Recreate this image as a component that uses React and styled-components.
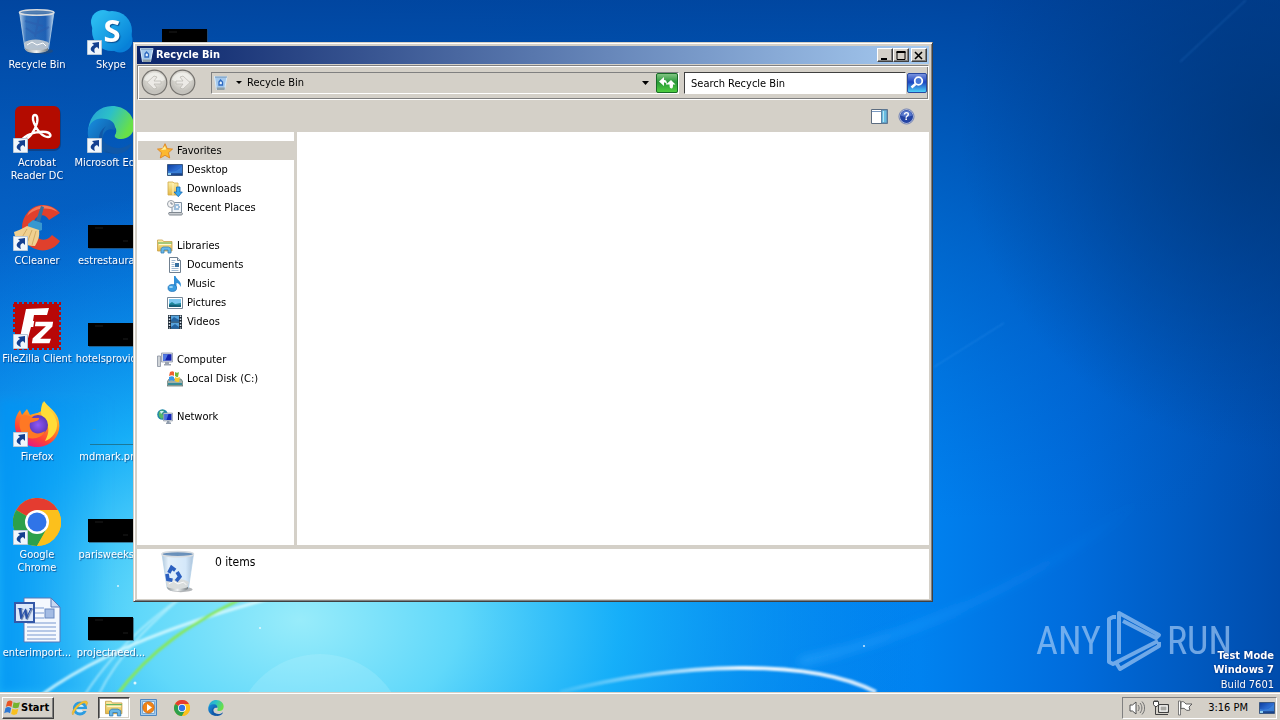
import styled, { createGlobalStyle, css } from "styled-components"

const GlobalStyle = createGlobalStyle`
  * {
    box-sizing: border-box;
  }
  body {
    margin: 0;
    font-family: "DejaVu Sans Condensed", "DejaVu Sans", sans-serif;
    font-size: 11px;
    line-height: 13px;
    color: #000;
  }
  button, input {
    font: inherit;
    color: inherit;
    padding: 0;
    margin: 0;
    border: 0;
    background: none;
  }
  svg {
    display: block;
    flex-shrink: 0;
  }
`

const raised = css`
  background-color: #d4d0c8;
  border: 1px solid;
  border-color: #fff #404040 #404040 #fff;
  box-shadow: inset -1px -1px #808080;
`

const sunken = css`
  border: 1px solid;
  border-color: #808080 #fff #fff #808080;
`

const Screen = styled.div`
  display: flex;
  flex-direction: column;
  min-height: 100vh;
  overflow: hidden;
`

const Desktop = styled.main`
  position: relative;
  flex: 1;
  overflow: hidden;
`

const Wallpaper = styled.svg`
  position: absolute;
  inset: 0;
  width: 100%;
  height: 100%;
`

const Shortcuts = styled.div`
  position: relative;
  display: grid;
  grid-auto-flow: column;
  grid-template-rows: repeat(7, 98px);
  grid-auto-columns: 74px;
`

const Shortcut = styled.a`
  display: flex;
  flex-direction: column;
  align-items: center;
  gap: 2px;
  padding-top: 8px;
  color: #fff;
  text-align: center;
  text-decoration: none;
  text-shadow: 1px 1px 1px rgba(0, 30, 90, 0.6);
`

const ShortcutIcon = styled.span`
  position: relative;
  display: block;
  width: 48px;
  height: 48px;
`

const ShortcutLabel = styled.span`
  width: ${props => props.$wrap ? "64px" : "72px"};
  white-space: ${props => props.$wrap ? "normal" : "nowrap"};
  display: flex;
  justify-content: center;
`

const ArrowBadge = styled.svg`
  position: absolute;
  left: 0;
  bottom: 1px;
`

const Window = styled.section`
  position: absolute;
  top: 42px;
  right: 347px;
  bottom: 90px;
  left: 133px;
  display: flex;
  flex-direction: column;
  padding: 2px;
  background-color: #d4d0c8;
  border: 1px solid;
  border-color: #d4d0c8 #404040 #404040 #d4d0c8;
  box-shadow: inset 1px 1px #fff, inset -1px -1px #808080;
`

const TitleBar = styled.header`
  display: flex;
  align-items: center;
  gap: 1px;
  height: 18px;
  margin: 1px;
  padding: 0 2px;
  color: #fff;
  background: linear-gradient(90deg, #0a246a, #a6caf0);
`

const Title = styled.h1`
  flex: 1;
  margin: 0;
  font-size: 11px;
  line-height: 18px;
  font-weight: bold;
`

const CaptionButtons = styled.div`
  display: flex;
`

const CaptionButton = styled.button`
  ${raised}
  display: grid;
  place-items: center;
  width: 16px;
  height: 14px;
  margin-left: ${props => props.$apart ? "2px" : "0"};
`

const AddressBand = styled.div`
  display: flex;
  align-items: center;
  height: 35px;
  margin: 0 1px;
  padding-left: 3px;
  border: 1px solid;
  border-color: #808080 #fff #fff #808080;
  box-shadow: inset 1px 1px #fff, inset -1px -1px #808080;
`

const Travel = styled.div`
  display: flex;
  align-items: center;
  gap: 1px;
  margin-right: 15px;
`

const TravelButton = styled.button`
  width: 27px;
  height: 27px;
`

const AddressBox = styled.div`
  ${sunken}
  display: flex;
  align-items: center;
  flex: 1;
  height: 22px;
  padding-left: 1px;
`

const Crumb = styled.button`
  display: flex;
  align-items: center;
  flex: 1;
  gap: 4px;
  text-align: left;
`

const SquareButton = styled.button`
  display: grid;
  place-items: center;
  width: 22px;
  height: 22px;
  flex-shrink: 0;
`

const SearchForm = styled.form`
  display: flex;
  align-items: center;
  width: 244px;
  margin-left: 5px;
`

const SearchInput = styled.input`
  flex: 1;
  min-width: 0;
  height: 22px;
  padding: 1px 6px 0;
  background-color: #fff;
  border: 1px solid;
  border-color: #404040 #fff #fff #404040;
  outline: 1px solid #d4d0c8;
  &::placeholder {
    color: #000;
    opacity: 1;
  }
`

const CommandBar = styled.div`
  display: flex;
  align-items: center;
  justify-content: flex-end;
  gap: 10px;
  height: 32px;
  padding-right: 15px;
`

const Panes = styled.div`
  display: flex;
  flex: 1;
  min-height: 0;
  margin: 0 1px;
`

const Sidebar = styled.nav`
  display: flex;
  flex-direction: column;
  gap: 19px;
  width: 160px;
  padding: 9px 0 0 1px;
  background-color: #fff;
  border-right: 3px solid #d4d0c8;
`

const Group = styled.ul`
  margin: 0;
  padding: 0;
  list-style: none;
`

const NavLink = styled.a`
  display: flex;
  align-items: center;
  gap: 4px;
  height: 19px;
  padding-left: ${props => props.$child ? "29px" : "19px"};
  color: #000;
  text-decoration: none;
  background-color: ${props => props.$active ? "#d4d0c8" : "transparent"};
`

const FileArea = styled.div`
  flex: 1;
  background-color: #fff;
`

const Details = styled.footer`
  display: flex;
  gap: 15px;
  height: 50px;
  margin: 4px 1px 0;
  padding: 1px 0 0 19px;
  background-color: #fff;
`

const ItemCount = styled.p`
  margin: 6px 0 0;
  font-size: 12px;
`

const Branding = styled.div`
  position: absolute;
  right: 48px;
  bottom: 19px;
  display: flex;
  align-items: center;
  gap: 5px;
  color: rgba(170, 208, 248, 0.65);
  font-family: "Roboto Condensed", "Liberation Sans Narrow", Roboto, sans-serif;
  font-size: 38px;
  line-height: 64px;
`

const BuildInfo = styled.div`
  position: absolute;
  right: 6px;
  bottom: 0;
  color: #fff;
  text-align: right;
  line-height: 15px;
  text-shadow: 0 0 2px rgba(0, 20, 80, 0.8);
`

const BuildStrong = styled.strong`
  display: block;
  line-height: 14px;
`

const Taskbar = styled.footer`
  display: flex;
  align-items: center;
  height: 28px;
  padding: 2px 3px 0 2px;
  background-color: #d4d0c8;
  border-top: 1px solid #d4d0c8;
  box-shadow: inset 0 1px #fff;
`

const StartButton = styled.button`
  ${raised}
  display: flex;
  align-items: center;
  height: 22px;
  width: 52px;
  padding-left: 1px;
  margin-right: 9px;
  font-weight: bold;
`

const TaskButton = styled.button`
  display: grid;
  place-items: center;
  width: 32px;
  height: 22px;
  margin: 0 1px;
  ${props => props.$active && css`
    background-color: #fff;
    border: 1px solid;
    border-color: #404040 #fff #fff #404040;
    box-shadow: inset 1px 1px #808080, inset -1px -1px #d4d0c8;
  `}
`

const Tray = styled.div`
  ${sunken}
  display: flex;
  align-items: center;
  gap: 8px;
  height: 22px;
  margin-left: auto;
  padding: 0 1px 0 6px;
`

const Clock = styled.time`
  margin: 0 3px 0 7px;
`

function Gradients () {
  return (
    <svg width="0" height="0" aria-hidden="true">
      <defs>
        <linearGradient id="glass" x1="0" x2="1">
          <stop offset="0" stopColor="#e4f0fa" stopOpacity=".85"/>
          <stop offset=".2" stopColor="#7cacdc" stopOpacity=".4"/>
          <stop offset=".75" stopColor="#4c84cc" stopOpacity=".4"/>
          <stop offset="1" stopColor="#e8f4fc" stopOpacity=".85"/>
        </linearGradient>
        <linearGradient id="paleGlass" x1="0" x2="1">
          <stop offset="0" stopColor="#b0c8dc"/>
          <stop offset=".2" stopColor="#e4f0fa"/>
          <stop offset=".75" stopColor="#d4e8fa"/>
          <stop offset="1" stopColor="#a8c0d8"/>
        </linearGradient>
        <linearGradient id="metal" x1="0" x2="1">
          <stop offset="0" stopColor="#90989c"/>
          <stop offset=".5" stopColor="#f0f2f2"/>
          <stop offset="1" stopColor="#747c80"/>
        </linearGradient>
        <linearGradient id="skype" x1="0" y1="0" x2="1" y2="1">
          <stop offset="0" stopColor="#30c4f4"/>
          <stop offset="1" stopColor="#0078d4"/>
        </linearGradient>
        <linearGradient id="edgeTop" x1="0" y1="0" x2="1" y2=".4">
          <stop offset="0" stopColor="#249cd8"/>
          <stop offset=".5" stopColor="#2cc0c8"/>
          <stop offset="1" stopColor="#68e048"/>
        </linearGradient>
        <linearGradient id="edgeLow" x1="0" y1="0" x2="1" y2="1">
          <stop offset="0" stopColor="#1890e0"/>
          <stop offset="1" stopColor="#0c4894"/>
        </linearGradient>
        <linearGradient id="fox" x1=".8" y1="0" x2=".3" y2="1">
          <stop offset="0" stopColor="#fff44c"/>
          <stop offset=".4" stopColor="#ff9820"/>
          <stop offset=".75" stopColor="#ff4038"/>
          <stop offset="1" stopColor="#e0148c"/>
        </linearGradient>
        <radialGradient id="foxGlobe">
          <stop offset="0" stopColor="#9058f8"/>
          <stop offset="1" stopColor="#5c38b8"/>
        </radialGradient>
        <linearGradient id="screenBlue" x1="0" y1="0" x2="1" y2="1">
          <stop offset="0" stopColor="#0c3c9c"/>
          <stop offset=".5" stopColor="#2c6cd0"/>
          <stop offset="1" stopColor="#1450b0"/>
        </linearGradient>
        <linearGradient id="folder" x1="0" y1="0" x2="0" y2="1">
          <stop offset="0" stopColor="#fcf0a8"/>
          <stop offset="1" stopColor="#e4b848"/>
        </linearGradient>
        <linearGradient id="green" x1="0" y1="0" x2="0" y2="1">
          <stop offset="0" stopColor="#88c888"/>
          <stop offset=".45" stopColor="#289838"/>
          <stop offset="1" stopColor="#50d040"/>
        </linearGradient>
        <linearGradient id="seek" x1="0" y1="0" x2="0" y2="1">
          <stop offset="0" stopColor="#8098e0"/>
          <stop offset=".45" stopColor="#1c44c0"/>
          <stop offset="1" stopColor="#50d8fc"/>
        </linearGradient>
        <radialGradient id="round" cx=".5" cy=".35">
          <stop offset="0" stopColor="#f0efec"/>
          <stop offset=".6" stopColor="#d8d6d0"/>
          <stop offset="1" stopColor="#c4c2bc"/>
        </radialGradient>
      </defs>
    </svg>
  )
}

function Bin ({ size = 48, full }) {
  return (
    <svg width={size} height={size} viewBox="0 0 48 48">
      <ellipse cx="27" cy="43" rx="13" ry="3" fill="#404850" opacity=".4"/>
      <path d="M6.500 4 12 41c1 4 22 4 23.500 0L41 4z" fill={full ? "url(#paleGlass)" : "url(#glass)"} stroke="#b4d0e8" strokeWidth=".8"/>
      <path d="M11 35c6-5 19-4 25 0l-1.500 6c-2 4-20 4-22 0z" fill="#d8d8d4" opacity=".8"/>
      <path d="M12 40c3 3 19 3 23 0v2c-2 4-21 4-22.500 0z" fill="url(#metal)"/>
      <path d="m14 37 5-3 5 3 6-2 3 3" fill="none" stroke="#fff" strokeWidth="1"/>
      {full
        ? <g fill="none" stroke="#2c60c0" strokeWidth="4">
            <path d="m14 25 3-6 4 3"/>
            <path d="m12 26 1 6 5 1"/>
            <path d="m23 24 3 5-4 5"/>
          </g>
        : <path d="m13 20 9 6 14-7M26 9l-4 20M12 13l18 5" fill="none" stroke="#2c5cac" strokeWidth="2" opacity=".5"/>}
      <ellipse cx="23.700" cy="4.500" rx="17.200" ry="2.800" fill="#507cac" fillOpacity=".8" stroke="#d8dce0" strokeWidth="1.600"/>
    </svg>
  )
}

function TinyBin () {
  return (
    <svg width="16" height="16" viewBox="0 0 16 16">
      <path d="m1.500 1.500 2 13h8l2.500-13z" fill="#a4c8ec" stroke="#d8ecfc"/>
      <path d="M3.500 12.500h8.500l-.5 2.500H4z" fill="#90a0a8"/>
      <path d="M2 2h12" stroke="#7090b0"/>
      <path d="m6 7 1.500-2L9.500 7v3H6z" fill="#e8f4ff" stroke="#2c68c0" strokeWidth="1.300"/>
    </svg>
  )
}

function Skype () {
  return (
    <svg width="48" height="48" viewBox="0 0 48 48">
      <circle cx="16" cy="14" r="12" fill="#28b8f0"/>
      <circle cx="33" cy="32" r="12.500" fill="#0880d8"/>
      <circle cx="25" cy="23" r="20" fill="url(#skype)"/>
      <text x="25" y="34" textAnchor="middle" fontFamily="Open Sans, sans-serif" fontWeight="bold" fontSize="31" fill="#fff">S</text>
    </svg>
  )
}

function Acrobat () {
  return (
    <svg width="48" height="48" viewBox="0 0 48 48">
      <rect x="3" y="1" width="45" height="44" rx="7" fill="#182c58" opacity=".5"/>
      <rect x="2" y="0" width="45" height="43" rx="6" fill="#b30b00"/>
      <path d="M11 34c5-1 11-9 13-17 1-5 0-8-2-8s-3 3-1 8c3 8 9 14 14 14 4 0 3-4-2-5-6-1-14 1-18 3-5 3-7 5-4 5z" fill="none" stroke="#fff" strokeWidth="2.400"/>
    </svg>
  )
}

function Edge ({ size = 48 }) {
  return (
    <svg width={size} height={size} viewBox="0 0 48 48">
      <path d="M1 24C3 8 13 0 25 0c13 0 22 9 22 20 0 8-6 13-13 13-5 0-7-2-6-4 3-4 1-11-7-11C11 18 3 23 1 24z" fill="url(#edgeTop)"/>
      <path d="M1 24c2-9 9-13 18-11 6 1 10 5 9 11-8-3-13 3-12 10 1 6 6 11 12 13C12 49-1 38 1 24z" fill="url(#edgeLow)"/>
      <path d="M19 20c-5 6-5 15 2 19 8 5 17 3 22-1 2-1 2 1 1 2-4 6-10 8-16 8-9-1-16-8-16-16 0-5 3-9 7-12z" fill="#1058a8"/>
    </svg>
  )
}

function CCleaner () {
  return (
    <svg width="48" height="48" viewBox="0 0 48 48">
      <path d="M47 9C39-1 23-2 15 8 5 19 8 38 20 44c10 5 21 2 27-7l-8-6c-5 6-11 6-15 2-6-6-5-16 0-20 5-3 9-2 12 3z" fill="#e0402c"/>
      <path d="M45 8C36-1 24 0 16 8l-2 4c8-8 20-10 31-4z" fill="#f47858"/>
      <path d="M27 18 31 3l-3-1-5 15z" fill="#3470a0"/>
      <path d="m15 20 5-4 9 3v7l-5 2-9-4z" fill="#3898d0"/>
      <path d="M14 22C9 25 4 27 1 28c1 9 10 14 21 14 3-5 5-10 4-16z" fill="#f0d090"/>
      <path d="m14 25-6 10m11-9-5 13m9-12-4 14" stroke="#c8a058" strokeWidth=".8" fill="none"/>
    </svg>
  )
}

function FileZilla () {
  return (
    <svg width="48" height="48" viewBox="0 0 48 48">
      <rect x="2" y="2" width="44" height="44" fill="#b80808"/>
      <rect x="1" y="1" width="46" height="46" fill="none" stroke="#b80808" strokeWidth="2" strokeDasharray="3 2"/>
      <path d="m13 7 23-1-2 7H21l-1 6h11l-2 6H18l-4 15H6z" fill="#fff"/>
      <path d="M22 19h19l-1 6-11 11h10l-2 6H18l1-6 12-11H21z" fill="#fff" stroke="#b80808" strokeWidth="1.500"/>
    </svg>
  )
}

function Firefox () {
  return (
    <svg width="48" height="48" viewBox="0 0 48 48">
      <path d="M31 1c3 5 11 9 14 17 5 14-4 28-19 29C11 48 1 36 2 23c0-5 2-9 5-13l2 5 5-6 3 6c6-2 10-2 12-5 1-3 0-6 2-9z" fill="url(#fox)"/>
      <path d="M30 2c4 7 12 10 14 21 1 8-5 16-12 18 5-9 4-15 0-20-5-5-5-12-2-19z" fill="#ffdc38"/>
      <circle cx="25" cy="25" r="10" fill="url(#foxGlobe)"/>
      <path d="M8 17c4-3 8-2 12 1h6c1 3-7 4-9 5-2 8 6 14 15 8-3 8-17 11-23 2-3-5-3-11-1-16z" fill="#ff7824"/>
    </svg>
  )
}

function Chrome ({ size = 48 }) {
  return (
    <svg width={size} height={size} viewBox="0 0 48 48">
      <circle cx="24" cy="24" r="24" fill="#fcc01c"/>
      <path d="M24 24 3.200 12A24 24 0 0 1 44.800 12z" fill="#e43c30"/>
      <path d="M24 24 3.200 12A24 24 0 0 0 24 48l10-18z" fill="#2ca04c"/>
      <path d="M24 12h20.800A24 24 0 0 1 24 48l10.400-18z" fill="#fcc01c"/>
      <circle cx="24" cy="24" r="12" fill="#fff"/>
      <circle cx="24" cy="24" r="9.500" fill="#3074e8"/>
    </svg>
  )
}

function WordDoc () {
  return (
    <svg width="48" height="48" viewBox="0 0 48 48">
      <path d="M11 2h27l9 9v35H11z" fill="#f4f8fe" stroke="#5878b8"/>
      <path d="m38 2 9 9h-9z" fill="#c8d8f0" stroke="#5878b8"/>
      <path d="M22 12h9m-9 5h9m-9 5h9M14 27h29M14 31h29M14 35h29M14 39h29M14 43h29" stroke="#7898d0"/>
      <rect x="32" y="13" width="9" height="9" fill="#a4bce4" stroke="#6888c0"/>
      <rect x="2" y="7" width="19" height="19" fill="#dce8fa" stroke="#3458a8" strokeWidth="2"/>
      <text x="11" y="23" textAnchor="middle" fontFamily="Liberation Serif, serif" fontWeight="bold" fontStyle="italic" fontSize="17" fill="#2850a8">W</text>
    </svg>
  )
}

function Thumb () {
  return (
    <svg width="48" height="48" viewBox="0 0 48 48">
      <path d="M2 22h45v23H2z" fill="#304858" opacity=".6"/>
      <path d="M1 21h45v23H1z" fill="#000"/>
      <path d="M8 24h8m20 13h5" stroke="#1c1c1c"/>
    </svg>
  )
}

function ThinThumb () {
  return (
    <svg width="48" height="48" viewBox="0 0 48 48">
      <path d="M3 44.500h45" stroke="#1c7898"/>
      <path d="M6 29.500h3" stroke="#38a0c8"/>
    </svg>
  )
}

function ShortcutArrow () {
  return (
    <ArrowBadge width="15" height="15" viewBox="0 0 15 15">
      <path d="M.5.5h14v14H.5z" fill="#f0f6fc" stroke="#b8c8d8"/>
      <path d="m5 3 7-1v7l-2-2c-3 1-3 3-2 6-5-2-6-5-1-8z" fill="#144090"/>
    </ArrowBadge>
  )
}

function Screenlet () {
  return (
    <svg width="16" height="16" viewBox="0 0 16 16">
      <path d="M.5 2.500h15v11H.5z" fill="url(#screenBlue)" stroke="#3c5880"/>
      <path d="M1 9c5 2 10 0 14-5v8H1z" fill="#4890e0" opacity=".6"/>
      <path d="M1 12h14" stroke="#102c60"/>
      <path d="M1 11h3v2H1z" fill="#90d0f0"/>
    </svg>
  )
}

function Star () {
  return (
    <svg width="16" height="16" viewBox="0 0 16 16">
      <path d="m8 .7 2.200 4.900 5.300.5-4 3.600 1.200 5.300L8 12.300 3.300 15l1.200-5.300-4-3.600 5.300-.5z" fill="#fcb830" stroke="#e08420" strokeWidth=".9"/>
      <path d="m8 3 1.200 3.400L4 7z" fill="#fff098"/>
    </svg>
  )
}

function Downloads () {
  return (
    <svg width="16" height="16" viewBox="0 0 16 16">
      <path d="M1 1h5l1 1h4v12H1z" fill="url(#folder)" stroke="#d0a848" strokeWidth=".8"/>
      <path d="M6 2v12" stroke="#fff4c0"/>
      <path d="M9.500 6H13v5h2.300l-4 4.700L7 11h2.500z" fill="#38a8f0" stroke="#1868b0" strokeWidth=".8"/>
    </svg>
  )
}

function RecentPlaces () {
  return (
    <svg width="16" height="16" viewBox="0 0 16 16">
      <path d="M5 2.500h9.500v10H5z" fill="#f0f4f8" stroke="#8090a0"/>
      <path d="M7 5h5M7 7h2m2 0h2M7 9h5" stroke="#4888c0"/>
      <path d="M2 12.500h12c2 0 2 2.500 0 2.500H3c-1 0-2-1-1-2.500z" fill="#c8ccd0" stroke="#808890"/>
      <circle cx="4" cy="4" r="3.500" fill="#f4f4f4" stroke="#98a0a8"/>
      <path d="M4 2v2h2" fill="none" stroke="#607080" strokeWidth=".8"/>
    </svg>
  )
}

function Libraries ({ size = 16 }) {
  return (
    <svg width={size} height={size} viewBox="0 0 16 16">
      <path d="M.5 2h5l1 1.500h8.500V13H.5z" fill="url(#folder)" stroke="#c8a048" strokeWidth=".8"/>
      <path d="M1 5h14" stroke="#5cb060"/>
      <path d="M2 6.500h12" stroke="#fff8d0"/>
      <path d="M4 15v-4.500L6 9h5.500l2.500 1.500V15h-3v-3H7v3z" fill="#68b8e8" stroke="#3880b8" strokeWidth=".8"/>
    </svg>
  )
}

function Documents () {
  return (
    <svg width="16" height="16" viewBox="0 0 16 16">
      <path d="M2.500.5h8l3 3v12h-11z" fill="#fff" stroke="#708090"/>
      <path d="M10.500.5v3h3" fill="#d8e4f0" stroke="#708090"/>
      <path d="M4.500 3.500h4m-4 2h3m-3 2h3m-3 2h3m-3 2h7m-7 2h7" stroke="#88a8c8" strokeWidth=".8"/>
      <path d="M8 6h4v4H8z" fill="#3870a0"/>
    </svg>
  )
}

function Music () {
  return (
    <svg width="16" height="16" viewBox="0 0 16 16">
      <path d="M8.500 0c1 4 7 5 5 11-1-3-2-4-4-4v5H7V0z" fill="#3090d8"/>
      <ellipse cx="5.300" cy="12" rx="4.300" ry="3.500" fill="#389ce0" stroke="#1c70b8" strokeWidth=".7"/>
      <ellipse cx="4" cy="11" rx="2" ry="1" fill="#a0d8f8"/>
    </svg>
  )
}

function Pictures () {
  return (
    <svg width="16" height="16" viewBox="0 0 16 16">
      <path d="M.5 2.500h15v11H.5z" fill="#fff" stroke="#788898"/>
      <path d="M2 4h12v8H2z" fill="#7cc8f0"/>
      <path d="m2 9 3-2 3 2 6-1v4H2z" fill="#20889c"/>
      <path d="M2 10c5-1 8 1 12 0v2H2z" fill="#146078"/>
    </svg>
  )
}

function Videos () {
  return (
    <svg width="16" height="16" viewBox="0 0 16 16">
      <path d="M1 1h14v14H1z" fill="#1c2834"/>
      <path d="M4 1.500h8v6H4zm0 7h8v6H4z" fill="#58a4dc"/>
      <path d="m4 6 3-3 5 3v1.500H4zm0 7 4-3 4 3v1.500H4z" fill="#2464a0"/>
      <path d="M2.500 1.500v13m11-13v13" stroke="#e0e8f0" strokeWidth="1.500" strokeDasharray="1.500 1.500"/>
    </svg>
  )
}

function Computer () {
  return (
    <svg width="16" height="16" viewBox="0 0 16 16">
      <path d="M.5 4h3v10.500h-3z" fill="#d0d4d8" stroke="#8890a0" strokeWidth=".8"/>
      <path d="M4.500 1h11v9h-11z" fill="#d8dce4" stroke="#9098a8" strokeWidth=".8"/>
      <path d="M6 2.200h8.500v6.500H6z" fill="#1424b0"/>
      <path d="M6 2.200h5L8 8.700H6z" fill="#5078e0"/>
      <path d="M8 10h4v2h2v1.500H7V12h1z" fill="#9ca4b0"/>
    </svg>
  )
}

function Disk () {
  return (
    <svg width="16" height="16" viewBox="0 0 16 16">
      <path d="M2 8h12l2 3v4H0v-4z" fill="#a0b0a8" stroke="#586c68" strokeWidth=".7"/>
      <path d="M1 12h14v2H1z" fill="#388c98"/>
      <path d="M3 1c2-1 3-1 4 0v4c-1-1-3-1-5 0z" fill="#f06030"/>
      <path d="M8 1c1 1 3 1 4 0l-1 5c-1 0-2 0-3-1z" fill="#70b838"/>
      <path d="M2 6c2-1 4-1 5 0v4c-2-1-3-1-5 0z" fill="#3898e8"/>
      <path d="M8 6c1 1 3 1 5 0l-1 5c-1 0-3 0-4-1z" fill="#f8c828"/>
    </svg>
  )
}

function Network () {
  return (
    <svg width="16" height="16" viewBox="0 0 16 16">
      <circle cx="5.500" cy="5.500" r="5.300" fill="#2088a8"/>
      <path d="M2 3c2-2 4-2 5-1L5 5l2 2-2 3C3 9 1 7 2 3z" fill="#58b868"/>
      <path d="M3 2h4L4 5z" fill="#d0f0f8"/>
      <path d="M6.500 4h9v8h-9z" fill="#c8d0dc" stroke="#8890a0" strokeWidth=".6"/>
      <path d="M7.500 5h7v6h-7z" fill="#1428b8"/>
      <path d="M7.500 5h4l-2 6h-2z" fill="#4870e0"/>
      <path d="M10 12h2.500v1.500H14V15H9v-1.500h1z" fill="#909cac"/>
    </svg>
  )
}

function TravelIcon ({ flip }) {
  return (
    <svg width="27" height="27" viewBox="0 0 27 27">
      <circle cx="13.500" cy="13.500" r="12.300" fill="url(#round)" stroke="#74726e" strokeWidth="1.200"/>
      <path d="M3 11C5 1 22 1 24 11c-7 3-14 3-21 0z" fill="#f4f3f0" opacity=".7"/>
      <path
        d={flip ? "M7 12h7l-3-4 3-1 7 6.500-7 6.500-3-1 3-4H7z" : "M20 12h-7l3-4-3-1-7 6.500 7 6.500 3-1-3-4h7z"}
        fill="#eceae6" stroke="#bcbab4" strokeWidth=".8"
      />
    </svg>
  )
}

function Refresh () {
  return (
    <svg width="22" height="20" viewBox="0 0 22 20">
      <rect x=".5" y=".5" width="21" height="19" rx="1.500" fill="url(#green)" stroke="#186c28"/>
      <path d="M3 8.500 8 4v3c2 0 3 1 3 5-1-2-1.500-2.500-3-2.500V13z" fill="#fff"/>
      <path d="m10 11.500 5-4.500 4.500 4.500H17c0 2 0 3-1 4-2 0-2.500-1-2.500-4z" fill="#fff"/>
    </svg>
  )
}

function Seek () {
  return (
    <svg width="20" height="20" viewBox="0 0 20 20">
      <rect x=".5" y=".5" width="19" height="19" rx="1.500" fill="url(#seek)" stroke="#2848a0"/>
      <circle cx="11.500" cy="8" r="3.800" fill="#4878d8" stroke="#fff" strokeWidth="1.800"/>
      <path d="m8.500 11-4 3.500" stroke="#fff" strokeWidth="2.500"/>
    </svg>
  )
}

function PreviewPane () {
  return (
    <svg width="17" height="15" viewBox="0 0 17 15">
      <path d="M.5.5h16v14H.5z" fill="#fff" stroke="#5c6c80"/>
      <path d="M1 2.500h10" stroke="#7898c0"/>
      <path d="M10.500 1h5.500v13h-5.500z" fill="#68bce0" stroke="#5c84a8"/>
      <path d="M12.500 2v11" stroke="#b8e4f4"/>
    </svg>
  )
}

function Help () {
  return (
    <svg width="17" height="17" viewBox="0 0 18 18">
      <circle cx="9" cy="9" r="8" fill="#c4cce4" stroke="#7080b0"/>
      <circle cx="9" cy="9" r="6.900" fill="#2444a4"/>
      <path d="M3 8c1-7 11-7 12 0-4 2-8 2-12 0z" fill="#6c8cdc" opacity=".7"/>
      <text x="9" y="13" textAnchor="middle" fontFamily="Liberation Sans, sans-serif" fontWeight="bold" fontSize="11" fill="#fff">?</text>
    </svg>
  )
}

function WindowsFlag () {
  return (
    <svg width="17" height="17" viewBox="0 0 16 16">
      <path d="M3 2.500c2-1.500 3.500-1.500 5 0L7 7.500c-2-1.500-3.500-1-5.300 0z" fill="#e85424"/>
      <path d="M9 3c2 1 3.500 1 6 0l-1.300 5C12 9 10 9 8 8z" fill="#74b430"/>
      <path d="M1.400 8.500c2-1.500 3.500-1 5.300 0l-1 5c-2-1.500-3.500-1-5.500 0z" fill="#2c78d4"/>
      <path d="M7.800 9.200c2 1 3.500 1 5.700 0l-1.300 5c-2 1-3.700 1-5.500 0z" fill="#f8c020"/>
    </svg>
  )
}

function Explorer () {
  return (
    <svg width="18" height="18" viewBox="0 0 18 18">
      <circle cx="9" cy="9.500" r="5.600" fill="#d8f0fc" stroke="#2c9ce0" strokeWidth="3"/>
      <path d="M5 9h10" stroke="#2c9ce0" strokeWidth="2.400"/>
      <path d="M11 11h6" stroke="#d4d0c8" strokeWidth="2"/>
      <path d="M2 16c-4-3 7-15 13-14 3 1 1 4 0 5 1-2 0-3-2-3C8 5 3 13 2 16z" fill="#f4c430" stroke="#d09820" strokeWidth=".4"/>
    </svg>
  )
}

function MediaPlayer () {
  return (
    <svg width="17" height="17" viewBox="0 0 17 17">
      <path d="M.5.500h16v16H.5z" fill="#a8ccec" stroke="#4c88c4"/>
      <path d="M2.500 2.500h12v12h-12z" fill="#d8ecfa" stroke="#78a8d4"/>
      <circle cx="8.500" cy="8.500" r="5.700" fill="#f08418" stroke="#c85c08" strokeWidth=".6"/>
      <path d="m7 5 5 3.500L7 12z" fill="#fff"/>
    </svg>
  )
}

function Volume () {
  return (
    <svg width="16" height="16" viewBox="0 0 16 16">
      <path d="M1 5h2.500L7 2v12l-3.500-3H1z" fill="#fff" stroke="#505050"/>
      <path d="M9 5c1.500 2 1.500 4 0 6m2-8c2.500 3 2.500 7 0 10m2-11.500c3.500 4 3.500 9 0 13" fill="none" stroke="#707070"/>
    </svg>
  )
}

function TrayNetwork () {
  return (
    <svg width="16" height="16" viewBox="0 0 16 16">
      <path d="M5.500 4.500h10v8h-10z" fill="#c8c8c4" stroke="#404040"/>
      <path d="M7 6h7v5H7z" fill="#a8a8a4" stroke="#fff"/>
      <path d="M8 14.500h7M2.500 6v8.500H8" fill="none" stroke="#404040"/>
      <path d="M.5 1.500h5v3L4 6.500H2L.5 4.500z" fill="#fff" stroke="#404040"/>
      <path d="M2 0v2m2-2v2" stroke="#404040"/>
    </svg>
  )
}

function TrayFlag () {
  return (
    <svg width="16" height="16" viewBox="0 0 16 16">
      <path d="M1.500 1h2v14h-2z" fill="#fff" stroke="#606060" strokeWidth=".8"/>
      <path d="M4 2c2-1 3 0 4 1l1 1h6l-3 3 1 3c-3 1-4 0-5-1-1-1-3-1-4 0z" fill="#fff" stroke="#505050" strokeWidth=".9"/>
    </svg>
  )
}

function Scene () {
  return (
    <Wallpaper viewBox="0 0 1280 692" preserveAspectRatio="none" aria-hidden="true">
      <defs>
        <linearGradient id="sky" x1="0" x2="1">
          <stop offset="0" stopColor="#0878e4"/>
          <stop offset=".72" stopColor="#0082f0"/>
          <stop offset=".84" stopColor="#006cdc"/>
          <stop offset="1" stopColor="#004cac"/>
        </linearGradient>
        <linearGradient id="dusk" x1="0" y1="0" x2="0" y2="1">
          <stop offset="0" stopColor="#004098" stopOpacity=".9"/>
          <stop offset=".35" stopColor="#0048a4" stopOpacity=".45"/>
          <stop offset=".75" stopColor="#0058c0" stopOpacity="0"/>
        </linearGradient>
        <radialGradient id="glow" gradientUnits="userSpaceOnUse" cx="0" cy="0" r="1" gradientTransform="translate(300 620) scale(640 440)">
          <stop offset="0" stopColor="#98ecfa"/>
          <stop offset=".25" stopColor="#60d8fa"/>
          <stop offset=".5" stopColor="#18b4fa" stopOpacity=".9"/>
          <stop offset="1" stopColor="#0088f0" stopOpacity="0"/>
        </radialGradient>
        <radialGradient id="corner" gradientUnits="userSpaceOnUse" cx="1280" cy="130" r="320">
          <stop offset="0" stopColor="#003474" stopOpacity=".8"/>
          <stop offset="1" stopColor="#003474" stopOpacity="0"/>
        </radialGradient>
        <linearGradient id="leftShade" x1="0" x2="1">
          <stop offset="0" stopColor="#0094f4" stopOpacity=".8"/>
          <stop offset="1" stopColor="#0094f4" stopOpacity="0"/>
        </linearGradient>
        <linearGradient id="beam" x1="0" x2="1">
          <stop offset="0" stopColor="#30a8ff" stopOpacity=".6"/>
          <stop offset="1" stopColor="#1890ff" stopOpacity="0"/>
        </linearGradient>
        <linearGradient id="arc" x1="0" x2="1">
          <stop offset="0" stopColor="#fff" stopOpacity=".1"/>
          <stop offset=".6" stopColor="#fff" stopOpacity=".95"/>
          <stop offset="1" stopColor="#fff" stopOpacity=".8"/>
        </linearGradient>
        <filter id="soft"><feGaussianBlur stdDeviation="1"/></filter>
        <filter id="softer"><feGaussianBlur stdDeviation="4"/></filter>
      </defs>
      <path d="M0 0h1280v692H0z" fill="url(#sky)"/>
      <path d="M0 0h1280v692H0z" fill="url(#dusk)"/>
      <path d="M0 0h1280v692H0z" fill="url(#corner)"/>
      <path d="M0 0h1280v692H0z" fill="url(#glow)"/>
      <path d="M0 400h110v292H0z" fill="url(#leftShade)" filter="url(#softer)"/>
      <path d="M800 662C920 634 1040 580 1140 500" fill="none" stroke="url(#beam)" strokeWidth="8" filter="url(#softer)"/>
      <g fill="none" filter="url(#soft)">
        <path d="M40 696C130 630 260 600 420 560" stroke="#e0fcff" strokeWidth="3" opacity=".8"/>
        <path d="M84 696C120 640 170 600 240 560M98 696C120 650 160 615 190 590" stroke="#d0f8ff" strokeWidth="2" opacity=".6"/>
        <path d="M116 696C150 650 190 622 260 590" stroke="#88e858" strokeWidth="3"/>
        <path d="M560 692c120-30 250-34 316 0" stroke="url(#arc)" strokeWidth="4"/>
        <path d="m934 367 70-44M1180 62l66-62" stroke="#50a8f8" opacity=".35"/>
      </g>
      <circle cx="320" cy="740" r="86" fill="#d0fcff" opacity=".18"/>
      <g fill="#fff" opacity=".8">
        <circle cx="135" cy="683" r="1.500"/>
        <circle cx="118" cy="586" r="1"/>
        <circle cx="260" cy="628" r="1"/>
        <circle cx="864" cy="646" r="1"/>
      </g>
    </Wallpaper>
  )
}

const shortcuts = [
  { label: "Recycle Bin", icon: <Bin/> },
  { label: "Acrobat Reader DC", icon: <Acrobat/>, link: true, wrap: true },
  { label: "CCleaner", icon: <CCleaner/>, link: true },
  { label: "FileZilla Client", icon: <FileZilla/>, link: true },
  { label: "Firefox", icon: <Firefox/>, link: true },
  { label: "Google Chrome", icon: <Chrome/>, link: true, wrap: true },
  { label: "enterimport...", icon: <WordDoc/> },
  { label: "Skype", icon: <Skype/>, link: true },
  { label: "Microsoft Edge", icon: <Edge/>, link: true },
  { label: "estrestaura...", icon: <Thumb/> },
  { label: "hotelsprovid...", icon: <Thumb/> },
  { label: "mdmark.png", icon: <ThinThumb/> },
  { label: "parisweeks...", icon: <Thumb/> },
  { label: "projectneed...", icon: <Thumb/> },
  { label: "", icon: <Thumb/> },
]

const groups = [
  {
    name: "Favorites", icon: <Star/>, active: true, items: [
      { name: "Desktop", icon: <Screenlet/> },
      { name: "Downloads", icon: <Downloads/> },
      { name: "Recent Places", icon: <RecentPlaces/> },
    ],
  },
  {
    name: "Libraries", icon: <Libraries/>, items: [
      { name: "Documents", icon: <Documents/> },
      { name: "Music", icon: <Music/> },
      { name: "Pictures", icon: <Pictures/> },
      { name: "Videos", icon: <Videos/> },
    ],
  },
  {
    name: "Computer", icon: <Computer/>, items: [
      { name: "Local Disk (C:)", icon: <Disk/> },
    ],
  },
  { name: "Network", icon: <Network/>, items: [] },
]

function ExplorerWindow () {
  return (
    <Window>
      <TitleBar>
        <TinyBin/>
        <Title>Recycle Bin</Title>
        <CaptionButtons>
          <CaptionButton aria-label="Minimize">
            <svg width="10" height="9"><path d="M1 7h6v2H1z"/></svg>
          </CaptionButton>
          <CaptionButton aria-label="Maximize">
            <svg width="10" height="9"><path d="M1 1h8v7.500H1z" fill="none" stroke="#000"/><path d="M.5 0h9v2h-9z"/></svg>
          </CaptionButton>
          <CaptionButton $apart aria-label="Close">
            <svg width="10" height="9"><path d="m1 1 7 7m0-7L1 8" stroke="#000" strokeWidth="1.600"/></svg>
          </CaptionButton>
        </CaptionButtons>
      </TitleBar>

      <AddressBand>
        <Travel>
          <TravelButton aria-label="Back"><TravelIcon/></TravelButton>
          <TravelButton aria-label="Forward"><TravelIcon flip/></TravelButton>
        </Travel>
        <AddressBox>
          <Crumb>
            <TinyBin/>
            <svg width="10" height="4" viewBox="0 0 10 4"><path d="M3 0h6L6 3z"/></svg>
            Recycle Bin
          </Crumb>
          <SquareButton aria-label="Previous locations">
            <svg width="7" height="4" viewBox="0 0 7 4"><path d="M0 0h7L3.500 4z"/></svg>
          </SquareButton>
          <SquareButton aria-label="Refresh"><Refresh/></SquareButton>
        </AddressBox>
        <SearchForm>
          <SearchInput type="text" aria-label="Search Recycle Bin" placeholder="Search Recycle Bin"/>
          <SquareButton type="button" aria-label="Search"><Seek/></SquareButton>
        </SearchForm>
      </AddressBand>

      <CommandBar>
        <button aria-label="Show the preview pane"><PreviewPane/></button>
        <button aria-label="Get help"><Help/></button>
      </CommandBar>

      <Panes>
        <Sidebar>
          {groups.map(group => (
            <Group key={group.name}>
              <li><NavLink href="#" $active={group.active}>{group.icon}{group.name}</NavLink></li>
              {group.items.map(item => (
                <li key={item.name}><NavLink href="#" $child>{item.icon}{item.name}</NavLink></li>
              ))}
            </Group>
          ))}
        </Sidebar>
        <FileArea/>
      </Panes>

      <Details>
        <Bin size={44} full/>
        <ItemCount>0 items</ItemCount>
      </Details>
    </Window>
  )
}

function App () {
  return (
    <>
      <GlobalStyle/>
      <Screen>
        <Desktop>
          <Gradients/>
          <Scene/>
          <Shortcuts>
            {shortcuts.map((item, index) => (
              <Shortcut href="#" key={index}>
                <ShortcutIcon>
                  {item.icon}
                  {item.link && <ShortcutArrow/>}
                </ShortcutIcon>
                <ShortcutLabel $wrap={item.wrap}>{item.label}</ShortcutLabel>
              </Shortcut>
            ))}
          </Shortcuts>
          <Branding>
            <span>ANY</span>
            <svg width="56" height="62" viewBox="0 0 56 62" fill="none" stroke="currentColor" strokeWidth="4" strokeLinejoin="round">
              <path d="M10 7H7L3 9v43l4 2 45-23M13 44V3l40 22-3 3-33-17M11 54l3 5 39-23v-4"/>
            </svg>
            <span>RUN</span>
          </Branding>
          <BuildInfo>
            <BuildStrong>Test Mode</BuildStrong>
            <BuildStrong>Windows 7</BuildStrong>
            Build 7601
          </BuildInfo>
          <ExplorerWindow/>
        </Desktop>

        <Taskbar>
          <StartButton><WindowsFlag/>Start</StartButton>
          <TaskButton aria-label="Internet Explorer"><Explorer/></TaskButton>
          <TaskButton $active aria-label="Windows Explorer"><Libraries size={18}/></TaskButton>
          <TaskButton aria-label="Media Player"><MediaPlayer/></TaskButton>
          <TaskButton aria-label="Chrome"><Chrome size={16}/></TaskButton>
          <TaskButton aria-label="Edge"><Edge size={16}/></TaskButton>
          <Tray>
            <Volume/>
            <TrayNetwork/>
            <TrayFlag/>
            <Clock>3:16 PM</Clock>
            <Screenlet/>
          </Tray>
        </Taskbar>
      </Screen>
    </>
  )
}

export default App
